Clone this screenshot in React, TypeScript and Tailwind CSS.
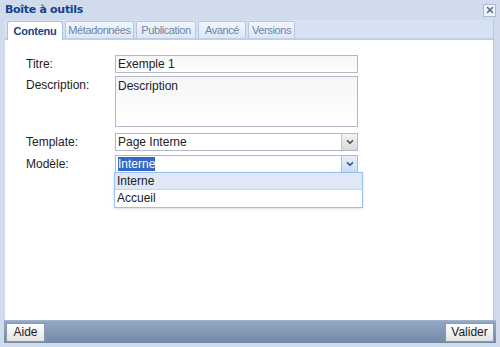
import { ChevronDown, X } from "lucide-react";

const tabs = [
  { name: "Contenu", w: "w-[56px]" },
  { name: "Métadonnées", w: "w-[69px]" },
  { name: "Publication", w: "w-[60px]" },
  { name: "Avancé", w: "w-[48px]" },
  { name: "Versions", w: "w-[47px]" },
];

function Field({ label, children }: { label: string; children: React.ReactNode }) {
  return (
    <div className="flex items-start">
      <div className="w-[89px] pt-[1px] text-[12px] leading-[16px] text-[#222]">{label}</div>
      {children}
    </div>
  );
}

function SelectBox({ value, open }: { value: string; open?: boolean }) {
  return (
    <div className="relative w-[243px]">
      <div className="flex h-[18px] border border-[#b5b8c8] bg-white">
        <div className="flex-1 pl-[2px] text-[12px] leading-[16px] text-[#222]">
          {open ? <span className="bg-[#3169c6] text-white">{value}</span> : value}
        </div>
        <div
          className={
            open
              ? "flex w-[16px] items-center justify-center border-l border-[#a3bde3] bg-gradient-to-b from-[#e7f0fb] to-[#c9dbf3]"
              : "flex w-[16px] items-center justify-center border-l border-[#c4c4c4] bg-gradient-to-b from-[#f4f4f4] to-[#d9d9d9]"
          }
        >
          <ChevronDown size={10} strokeWidth={4} className="text-[#3d4f6e]" />
        </div>
      </div>
      {open && (
        <div className="absolute left-[-1px] top-[17px] w-[249px] border border-[#98c0f4] bg-white text-[12px] text-[#222] shadow-sm">
          <div className="h-[17px] border-b border-[#c6d6ee] bg-[#dfe8f6] pl-[2px] leading-[17px]">Interne</div>
          <div className="h-[17px] pl-[2px] leading-[17px]">Accueil</div>
        </div>
      )}
    </div>
  );
}

export default function App() {
  return (
    <div className="flex h-[347px] w-[500px] flex-col bg-[#d0dbeb] font-['Liberation_Sans',Arial,sans-serif]">
      <div className="flex h-[20px] items-center justify-between pl-[5px] pr-[4px]">
        <span className="text-[11px] font-bold text-[#15428b] font-['DejaVu_Sans',sans-serif] tracking-[-0.3px]">
          Boîte à outils
        </span>
        <div className="flex h-[13px] w-[13px] items-center justify-center border border-[#a8bcd8] bg-[#eef3fa]">
          <X size={10} strokeWidth={3.5} className="text-[#4f6a92]" />
        </div>
      </div>
      <div className="ml-[5px] mr-[6px] flex flex-1 flex-col border-r border-[#b7c8e0]">
        <div className="flex h-[20px] items-end gap-[2px] border-b-2 border-[#bcd0ec] bg-[#d6e2f3] pl-[2px]">
          {tabs.map((t, i) =>
            i === 0 ? (
              <div
                key={t.name}
                className={`mb-[-2px] flex h-[19px] items-center justify-center rounded-t-[3px] border border-b-0 border-[#a8c2e6] bg-white text-[11px] font-bold tracking-[-0.2px] text-[#15428b] ${t.w}`}
              >
                {t.name}
              </div>
            ) : (
              <div
                key={t.name}
                className={`flex h-[17px] items-center justify-center rounded-t-[2px] border border-b-0 border-[#b3c8e6] bg-gradient-to-b from-[#f2f6fc] to-[#dde7f5] text-[11px] tracking-[-0.4px] text-[#6c84a8] ${t.w}`}
              >
                {t.name}
              </div>
            )
          )}
        </div>
        <div className="flex flex-1 flex-col gap-[3px] bg-white pl-[21px] pt-[15px]">
          <Field label="Titre:">
            <div className="h-[18px] w-[243px] border border-[#b5b8c8] bg-gradient-to-b from-[#f6f6f6] to-white pl-[2px] text-[12px] leading-[16px] text-[#222]">
              Exemple 1
            </div>
          </Field>
          <Field label="Description:">
            <div className="h-[51px] w-[243px] border border-[#b5b8c8] bg-gradient-to-b from-[#f6f6f6] to-white pl-[2px] pt-[1px] text-[12px] leading-[16px] text-[#222]">
              Description
            </div>
          </Field>
          <div className="mt-[3px]">
            <Field label="Template:">
              <SelectBox value="Page Interne" />
            </Field>
          </div>
          <div className="mt-[1px]">
            <Field label="Modèle:">
              <SelectBox value="Interne" open />
            </Field>
          </div>
        </div>
      </div>
      <div className="mx-[4px] flex h-[23px] items-center justify-between border-t border-[#9fb2cc] bg-gradient-to-b from-[#93a8c4] to-[#7389a8] px-[2px]">
        <div className="flex h-[19px] w-[39px] items-center justify-center border border-[#8d98a8] bg-gradient-to-b from-white to-[#e4e4e4] text-[12px] text-[#222]">
          Aide
        </div>
        <div className="flex h-[19px] w-[49px] items-center justify-center border border-[#8d98a8] bg-gradient-to-b from-white to-[#e4e4e4] text-[12px] text-[#222]">
          Valider
        </div>
      </div>
      <div className="h-[4px]" />
    </div>
  );
}
